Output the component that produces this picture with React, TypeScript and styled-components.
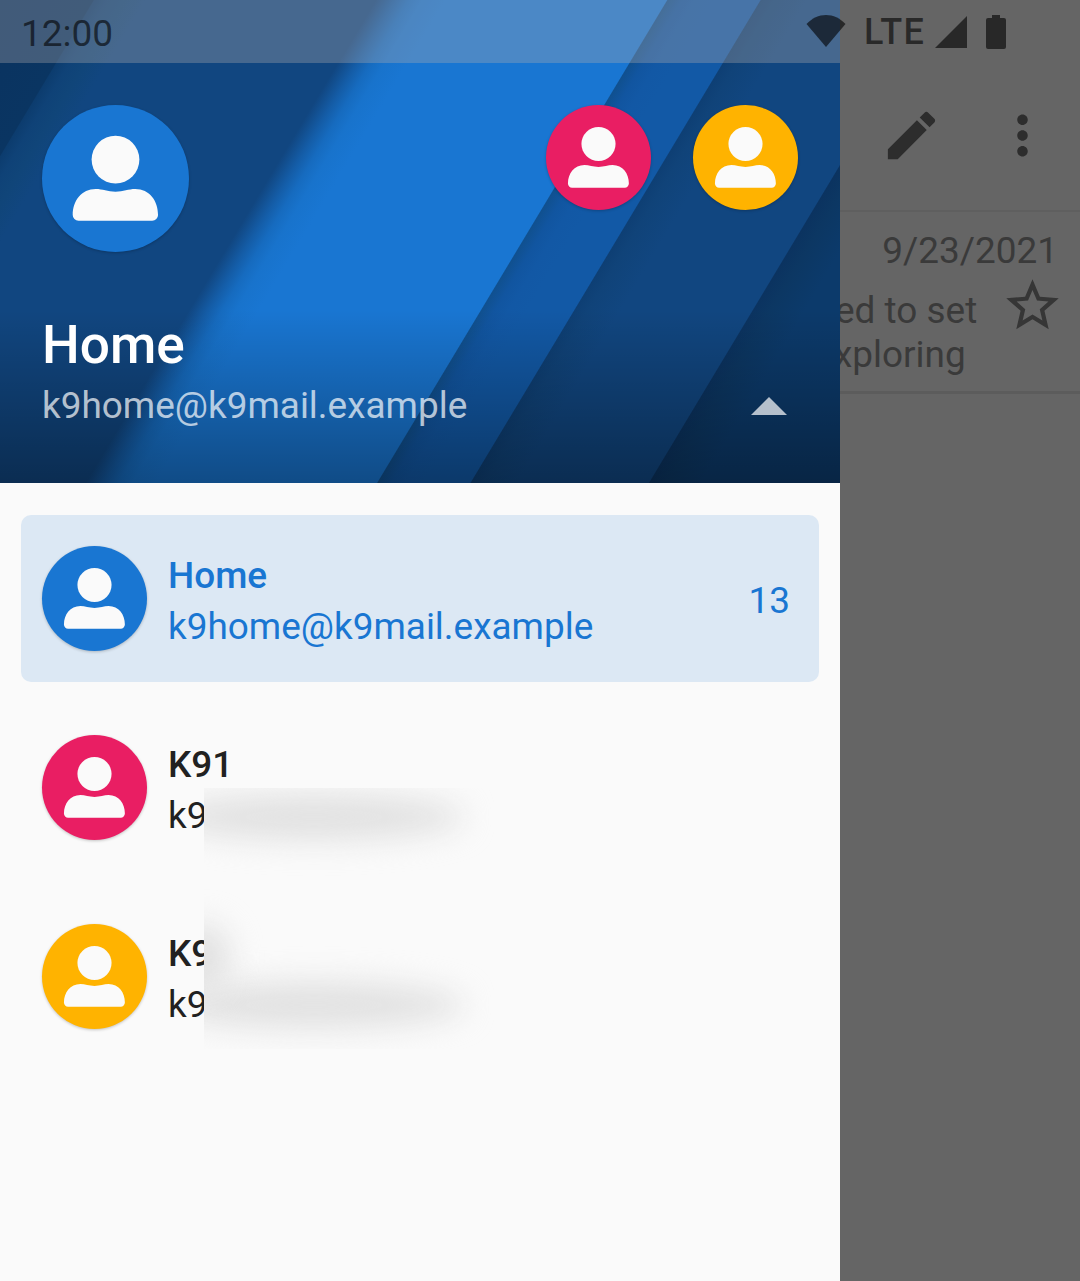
import React from "react";
import styled, { createGlobalStyle } from "styled-components";

const Global = createGlobalStyle`
  html, body { margin: 0; padding: 0; background: #666; }
  body { font-family: Roboto, "Liberation Sans", sans-serif; overflow: hidden; }
  * { box-sizing: border-box; }
`;

const Screen = styled.div`
  position: relative;
  width: 1080px;
  height: 1281px;
  display: flex;
  overflow: hidden;
  background: #656565;
`;

const Drawer = styled.aside`
  position: relative;
  width: 840px;
  flex: none;
  display: flex;
  flex-direction: column;
  background: #fafafa;
`;

const Header = styled.header`
  height: 483px;
  flex: none;
  display: flex;
  flex-direction: column;
  color: #fff;
  background:
    linear-gradient(to bottom, rgba(0, 0, 0, 0) 310px, rgba(0, 0, 0, 0.36) 483px),
    linear-gradient(
      121deg,
      #0a3360 0,
      #0a3562 80px,
      #0c3c6e 81px,
      #0f4277 92px,
      #104579 105px,
      #114680 125px,
      #114680 322px,
      #124e8e 328px,
      #145ca6 338px,
      #166bbf 350px,
      #1873cc 362px,
      #1976d2 382px,
      #1976d2 571.5px,
      #10508f 572.5px,
      #1155a0 584px,
      #1258a5 596px,
      #1259a6 612px,
      #1259a6 651.5px,
      #0e3f74 652.5px,
      #104379 664px,
      #114680 692px,
      #114680 804.5px,
      #0b3360 805.5px,
      #0c3763 820px,
      #0c3a6b 850px,
      #0c3a6b 1000px
    );
`;

const StatusTint = styled.div`
  height: 63px;
  flex: none;
  background: rgba(178, 174, 172, 0.33);
`;

const HeaderBody = styled.div`
  flex: 1;
  display: flex;
  flex-direction: column;
  padding: 42px 42px 0;
`;

const AvatarRow = styled.div`
  display: flex;
  align-items: flex-start;
  gap: 42px;
`;

const AvatarCircle = styled.div<{ $color: string; $size: number }>`
  width: ${(p) => p.$size}px;
  height: ${(p) => p.$size}px;
  flex: none;
  border-radius: 50%;
  background: ${(p) => p.$color};
  box-shadow: 0 1px 3px rgba(0, 0, 0, 0.22);
  &:first-child { margin-right: auto; }
`;

const PersonSvg = styled.svg`
  display: block;
  width: 100%;
  height: 100%;
`;

const HeaderName = styled.div`
  margin-top: 60px;
  font-size: 53.2px;
  font-weight: 500;
  line-height: 66px;
`;

const HeaderMailRow = styled.div`
  display: flex;
  align-items: center;
  justify-content: space-between;
  margin-top: 3px;
  padding-right: 11px;
`;

const HeaderMail = styled.div`
  font-size: 36.93px;
  line-height: 50px;
  color: rgba(255, 255, 255, 0.7);
`;

const Arrow = styled.svg`
  width: 36px;
  height: 18px;
  flex: none;
  margin-top: -1px;
  fill: rgba(255, 255, 255, 0.7);
`;

const AccountList = styled.div`
  position: relative;
  flex: 1;
  display: flex;
  flex-direction: column;
  gap: 22px;
  padding: 32px 21px 0;
`;

const Account = styled.div<{ $selected?: boolean }>`
  height: 167px;
  display: flex;
  align-items: center;
  gap: 21px;
  padding: 0 29px 0 21px;
  border-radius: 10px;
  background: ${(p) => (p.$selected ? "#dce8f4" : "transparent")};
  color: ${(p) => (p.$selected ? "#1976d2" : "#212121")};
`;

const AccountText = styled.div`
  flex: 1;
  display: flex;
  flex-direction: column;
  margin-top: 4px;
`;

const AccountName = styled.div`
  font-size: 36.93px;
  font-weight: 500;
  line-height: 51px;
`;

const AccountMail = styled.div`
  font-size: 36.93px;
  line-height: 51px;
`;

const Count = styled.div`
  font-size: 36.93px;
  line-height: 51px;
  margin-top: 4px;
`;

const Redaction = styled.div`
  position: absolute;
  left: 204px;
  top: 305px;
  width: 290px;
  height: 261px;
  overflow: hidden;
  background: #fafafa;
`;

const Smudge = styled.div<{ $x: number; $y: number; $w: number; $h: number }>`
  position: absolute;
  left: ${(p) => p.$x}px;
  top: ${(p) => p.$y}px;
  width: ${(p) => p.$w}px;
  height: ${(p) => p.$h}px;
  border-radius: 50%;
  background: #e1e1e1;
  filter: blur(15px);
`;

const Scrimmed = styled.main`
  flex: 1;
  min-width: 0;
  display: flex;
  flex-direction: column;
  padding-top: 63px;
  color: #363636;
  overflow: hidden;
`;

const Toolbar = styled.div`
  height: 149px;
  flex: none;
  display: flex;
  align-items: flex-start;
  justify-content: flex-end;
  padding: 41px 26px 0 0;
  gap: 48px;
  border-bottom: 2px solid #5f5f5f;
`;

const ToolIcon = styled.svg`
  width: 63px;
  height: 63px;
  flex: none;
  fill: #2d2d2d;
`;

const MessageRow = styled.div`
  height: 182px;
  flex: none;
  display: flex;
  flex-direction: column;
  border-bottom: 3px solid #5c5c5c;
  font-size: 36.93px;
  padding-top: 15px;
`;

const DateLine = styled.div`
  text-align: right;
  line-height: 48px;
  padding-right: 22px;
  color: #3a3a3a;
`;

const Preview = styled.div`
  display: flex;
  justify-content: space-between;
  margin-top: 1px;
`;

const PreviewText = styled.div`
  display: flex;
  flex-direction: column;
  line-height: 44px;
  padding-top: 13px;
  white-space: nowrap;
  color: #3a3a3a;
`;

const PreviewLine = styled.span<{ $shift: number }>`
  margin-left: ${(p) => p.$shift}px;
`;

const StarIcon = styled.svg`
  width: 63px;
  height: 63px;
  flex: none;
  margin: -2px 16px 0 0;
  fill: #363636;
`;

const StatusBar = styled.div`
  position: absolute;
  top: 0;
  left: 0;
  right: 0;
  height: 63px;
  display: flex;
  align-items: center;
  padding: 0 74px 0 21px;
  color: rgba(0, 0, 0, 0.6);
`;

const Clock = styled.div`
  font-size: 37px;
  margin-right: auto;
  padding-top: 4px;
`;

const Network = styled.div`
  margin: 0 10px 0 18px;
  font-size: 36px;
  font-weight: 500;
  letter-spacing: 1.2px;
`;

const StatusIcon = styled.svg<{ $w: number; $h: number; $gap?: number; $lift?: number }>`
  display: block;
  width: ${(p) => p.$w}px;
  height: ${(p) => p.$h}px;
  margin-left: ${(p) => p.$gap ?? 0}px;
  margin-top: ${(p) => p.$lift ?? 0}px;
  flex: none;
  fill: rgba(0, 0, 0, 0.6);
`;

const Person = () => (
  <PersonSvg viewBox="0 0 56 56" aria-hidden>
    <circle cx="28" cy="20.8" r="9.1" fill="#fafafa" />
    <path
      fill="#fafafa"
      d="M13.9 44.1H42a2.2 2.2 0 0 0 2.2-2.2C44.2 36.5 41 32 35.5 32C33 32 31 33 28 33C25 33 23 32 20.5 32C15 32 11.7 36.5 11.7 41.9a2.2 2.2 0 0 0 2.2 2.2Z"
    />
  </PersonSvg>
);

const Avatar = ({ color, size }: { color: string; size: number }) => (
  <AvatarCircle $color={color} $size={size}>
    <Person />
  </AvatarCircle>
);

const BLUE = "#1976d2";
const PINK = "#e91e63";
const AMBER = "#ffb300";

export default function App() {
  return (
    <Screen>
      <Global />
      <Drawer>
        <Header>
          <StatusTint />
          <HeaderBody>
            <AvatarRow>
              <Avatar color={BLUE} size={147} />
              <Avatar color={PINK} size={105} />
              <Avatar color={AMBER} size={105} />
            </AvatarRow>
            <HeaderName>Home</HeaderName>
            <HeaderMailRow>
              <HeaderMail>k9home@k9mail.example</HeaderMail>
              <Arrow viewBox="0 0 36 18" aria-hidden>
                <path d="M18 0L36 18H0Z" />
              </Arrow>
            </HeaderMailRow>
          </HeaderBody>
        </Header>
        <AccountList>
          <Account $selected>
            <Avatar color={BLUE} size={105} />
            <AccountText>
              <AccountName>Home</AccountName>
              <AccountMail>k9home@k9mail.example</AccountMail>
            </AccountText>
            <Count>13</Count>
          </Account>
          <Account>
            <Avatar color={PINK} size={105} />
            <AccountText>
              <AccountName>K91</AccountName>
              <AccountMail>k9</AccountMail>
            </AccountText>
          </Account>
          <Account>
            <Avatar color={AMBER} size={105} />
            <AccountText>
              <AccountName>K92</AccountName>
              <AccountMail>k9</AccountMail>
            </AccountText>
          </Account>
          <Redaction>
            <Smudge $x={-40} $y={6} $w={300} $h={46} />
            <Smudge $x={-40} $y={194} $w={300} $h={46} />
            <Smudge $x={-30} $y={135} $w={56} $h={70} />
          </Redaction>
        </AccountList>
      </Drawer>
      <Scrimmed>
        <Toolbar>
          <ToolIcon viewBox="0 0 24 24" aria-hidden>
            <path d="M3 17.25V21h3.75L17.81 9.94l-3.75-3.75L3 17.25zM20.71 7.04c.39-.39.39-1.02 0-1.41l-2.34-2.34c-.39-.39-1.02-.39-1.41 0l-1.83 1.83 3.75 3.75 1.83-1.83z" />
          </ToolIcon>
          <ToolIcon viewBox="0 0 24 24" aria-hidden>
            <path d="M12 8c1.1 0 2-.9 2-2s-.9-2-2-2-2 .9-2 2 .9 2 2 2zm0 2c-1.1 0-2 .9-2 2s.9 2 2 2 2-.9 2-2-.9-2-2-2zm0 6c-1.1 0-2 .9-2 2s.9 2 2 2 2-.9 2-2-.9-2-2-2z" />
          </ToolIcon>
        </Toolbar>
        <MessageRow>
          <DateLine>9/23/2021</DateLine>
          <Preview>
            <PreviewText>
              <PreviewLine $shift={-5}>ed to set</PreviewLine>
              <PreviewLine $shift={-6}>xploring</PreviewLine>
            </PreviewText>
            <StarIcon viewBox="0 0 24 24" aria-hidden>
              <path d="M22 9.24l-7.19-.62L12 2 9.19 8.63 2 9.24l5.46 4.73L5.82 21 12 17.27 18.18 21l-1.63-7.03L22 9.24zM12 15.4l-3.76 2.27 1-4.28-3.32-2.88 4.38-.38L12 6.1l1.71 4.04 4.38.38-3.32 2.88 1 4.28L12 15.4z" />
            </StarIcon>
          </Preview>
        </MessageRow>
      </Scrimmed>
      <StatusBar>
        <Clock>12:00</Clock>
        <StatusIcon $w={40} $h={32} $lift={-1} viewBox="0 0 40 32" aria-hidden>
          <path d="M0.5 9C6 3.2 12.8 0 20 0s14 3.2 19.5 9L20 32Z" />
        </StatusIcon>
        <Network>LTE</Network>
        <StatusIcon $w={32} $h={32} viewBox="0 0 32 32" aria-hidden>
          <path d="M0 32L32 0V32Z" />
        </StatusIcon>
        <StatusIcon $w={20} $h={34} $gap={19} viewBox="0 0 20 34" aria-hidden>
          <path d="M6 0H14V3H18a2 2 0 0 1 2 2V32a2 2 0 0 1-2 2H2a2 2 0 0 1-2-2V5a2 2 0 0 1 2-2H6Z" />
        </StatusIcon>
      </StatusBar>
    </Screen>
  );
}
